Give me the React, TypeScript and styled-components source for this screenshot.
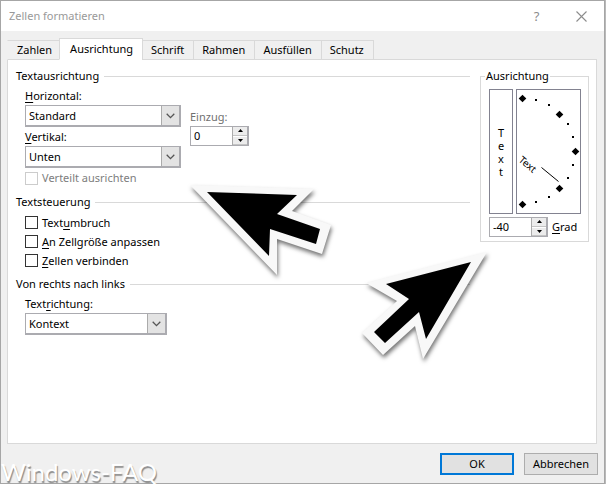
import React, { useId, useState } from "react";
import styled, { createGlobalStyle } from "styled-components";

const GlobalStyle = createGlobalStyle`
  *, *::before, *::after { box-sizing: border-box; }
  body {
    margin: 0;
    background: #b9b9b9;
    color: #000;
    font: 11px/16px "Noto Sans", "Open Sans", sans-serif;
  }
  button, input, select { font: inherit; color: inherit; }
  u { text-underline-offset: 2px; text-decoration-thickness: 1px; }
`;

const Desktop = styled.div`
  position: relative;
  padding-right: 1px;
  overflow: hidden;
`;

const Dialog = styled.main`
  display: flex;
  flex-direction: column;
  min-height: 100vh;
  border: 1px solid #a6a6a6;
  background: #f0f0f0;
`;

const TitleBar = styled.header`
  display: flex;
  align-items: center;
  height: 30px;
  padding-left: 8px;
  background: #fff;
`;

const Title = styled.h1`
  flex: 1;
  margin: 0;
  font-size: 11px;
  font-weight: 400;
  color: #999;
`;

const TitleButton = styled.button`
  display: grid;
  place-items: center;
  width: 45px;
  height: 28px;
  padding: 0;
  border: 0;
  background: transparent;
  color: #8c8c8c;
  font-size: 13px;
`;

const Tabs = styled.div`
  display: flex;
  align-items: flex-end;
  height: 29px;
  margin: 0 7px -1px 6px;
  position: relative;
  z-index: 1;
`;

const Tab = styled.button<{ $active: boolean }>`
  height: ${(p) => (p.$active ? 22 : 20)}px;
  margin-left: -1px;
  padding: ${(p) => (p.$active ? "0 9px 0 10px" : "0 9px 0 8px")};
  border: 1px solid #d9d9d9;
  border-bottom-color: ${(p) => (p.$active ? "#fff" : "#d9d9d9")};
  background: ${(p) => (p.$active ? "#fff" : "#f0f0f0")};
  white-space: nowrap;
  &:first-child { margin-left: 0; padding: 0 7px 0 9px; border-left-color: #f0f0f0; }
`;

const Panel = styled.section`
  display: grid;
  grid-template-columns: minmax(0, 1fr) 109px;
  column-gap: 10px;
  align-items: start;
  flex: 1;
  margin: 0 7px 0 6px;
  padding: 8px 7px 8px 8px;
  border: 1px solid #d9d9d9;
  background: #fff;
`;

const Group = styled.section`
  margin-bottom: 6px;
`;

const GroupTitle = styled.h2`
  display: flex;
  align-items: center;
  gap: 5px;
  margin: 0;
  font-size: 11px;
  font-weight: 400;
  &::after { content: ""; flex: 1; border-top: 1px solid #d9d9d9; }
`;

const GroupBody = styled.div<{ $top: number }>`
  display: flex;
  align-items: flex-start;
  gap: 9px;
  padding: ${(p) => p.$top}px 0 0 9px;
`;

const Stack = styled.div`
  display: flex;
  flex-direction: column;
`;

const Field = styled.div<{ $top?: number; $dim?: boolean }>`
  display: flex;
  flex-direction: column;
  align-items: flex-start;
  gap: 1px;
  margin-top: ${(p) => p.$top ?? 0}px;
  label { color: ${(p) => (p.$dim ? "#707070" : "#000")}; }
`;

const SelectFrame = styled.div<{ $width: number }>`
  display: grid;
  grid-template-columns: 1fr 18px;
  width: ${(p) => p.$width}px;
  height: 22px;
  border: 1px solid #ababb0;
  border-right-width: 2px;
  border-bottom-width: 2px;
  background: #fff;
  select {
    grid-area: 1 / 1 / 2 / 3;
    min-width: 0;
    padding: 0 20px 0 3px;
    border: 0;
    appearance: none;
    background: transparent;
    outline-offset: -2px;
  }
`;

const Arrow = styled.span`
  grid-area: 1 / 2 / 2 / 3;
  display: grid;
  place-items: center;
  border-left: 1px solid #ababab;
  background: #e3e3e3;
  pointer-events: none;
`;

const Check = styled.label<{ $height: number }>`
  display: flex;
  align-items: center;
  gap: 4px;
  height: ${(p) => p.$height}px;
  &:has(:disabled) { color: #7d7d7d; }
`;

const CheckBox = styled.input`
  appearance: none;
  width: 13px;
  height: 13px;
  margin: 0;
  border: 1px solid #333;
  background: #fff;
  &:disabled { border-color: #ccc; }
  &:checked { background: #333; box-shadow: inset 0 0 0 2px #fff; }
`;

const SpinFrame = styled.div`
  display: grid;
  grid-template-columns: 1fr 15px;
  width: 59px;
  height: 20px;
  border: 1px solid #ababb0;
  border-right-width: 2px;
  background: #fff;
  input {
    width: 100%;
    min-width: 0;
    padding: 0 0 0 3px;
    border: 0;
    background: transparent;
  }
`;

const SpinButtons = styled.div`
  display: grid;
  grid-template-rows: 1fr 1fr;
  gap: 1px;
  border-left: 1px solid #ababab;
`;

const SpinButton = styled.button`
  display: grid;
  place-items: center;
  min-height: 0;
  padding: 0;
  border: 0;
  border-bottom: 1px solid #c4c4c4;
  background: #ececec;
`;

const Orientation = styled.fieldset`
  min-width: 0;
  margin: 0;
  padding: 5px 7px 4px 8px;
  border: 1px solid #d9d9d9;
  legend { margin-left: -4px; padding: 0 1px; }
`;

const Previews = styled.div`
  display: grid;
  grid-template-columns: 24px 65px;
  gap: 3px;
  margin-bottom: 3px;
`;

const VerticalText = styled.button`
  height: 125px;
  padding: 0;
  border: 1px solid #828290;
  background: #fff;
  line-height: 13px;
  span { display: block; }
`;

const Dial = styled.svg`
  display: block;
  width: 65px;
  height: 125px;
  border: 1px solid #828290;
  background: #fff;
`;

const DegreeRow = styled.div`
  display: flex;
  align-items: center;
  gap: 4px;
`;

const Footer = styled.footer`
  display: flex;
  justify-content: flex-end;
  gap: 10px;
  padding: 9px 6px 8px;
`;

const Action = styled.button<{ $primary?: boolean }>`
  width: 74px;
  height: 22px;
  padding: 0;
  border: ${(p) => (p.$primary ? "2px solid #0078d7" : "1px solid #adadad")};
  background: #e1e1e1;
`;

const Pointer = styled.svg<{ $left: number; $top: number }>`
  position: absolute;
  left: ${(p) => p.$left}px;
  top: ${(p) => p.$top}px;
  overflow: visible;
  pointer-events: none;
  filter: drop-shadow(1px 3px 2px rgba(0, 0, 0, 0.55));
`;

const Watermark = styled.div`
  position: absolute;
  left: 1px;
  bottom: 0;
  font: 400 24px/24px Lato, sans-serif;
  color: #fff;
  text-shadow: 1px 2px 1px #8c8c8c;
  pointer-events: none;
`;

function Select({ label, value, width, top }: { label: React.ReactNode; value: string; width: number; top?: number }) {
  const id = useId();
  return (
    <Field $top={top}>
      <label htmlFor={id}>{label}</label>
      <SelectFrame $width={width}>
        <select id={id} defaultValue={value}>
          <option>{value}</option>
        </select>
        <Arrow>
          <svg width="9" height="6" viewBox="0 0 9 6" fill="none" stroke="#555" strokeWidth="1.3">
            <path d="M.7.8 4.5 4.6 8.3.8" />
          </svg>
        </Arrow>
      </SelectFrame>
    </Field>
  );
}

function Spinner({ id, start }: { id: string; start: number }) {
  const [value, setValue] = useState(String(start));
  const step = (n: number) => setValue(String((Number(value) || 0) + n));
  return (
    <SpinFrame>
      <input id={id} inputMode="numeric" value={value} onChange={(e) => setValue(e.target.value)} />
      <SpinButtons>
        <SpinButton type="button" aria-label="Erhöhen" onClick={() => step(1)}>
          <svg width="5" height="3" viewBox="0 0 5 3"><path d="M0 3 2.5 0 5 3Z" /></svg>
        </SpinButton>
        <SpinButton type="button" aria-label="Verringern" onClick={() => step(-1)}>
          <svg width="5" height="3" viewBox="0 0 5 3"><path d="M0 0 2.5 3 5 0Z" /></svg>
        </SpinButton>
      </SpinButtons>
    </SpinFrame>
  );
}

const tabs = ["Zahlen", "Ausrichtung", "Schrift", "Rahmen", "Ausfüllen", "Schutz"];
const majorMarks = [[5.5, 8.5], [42.5, 24.5], [58.5, 61.5], [42.5, 98.5], [5.5, 114.5]];
const minorMarks = [[18, 9], [31, 14], [50, 33], [55, 46], [55, 74], [50, 87], [31, 106], [18, 111]];

export default function App() {
  const indentId = useId();
  const degreeId = useId();
  const [active, setActive] = useState("Ausrichtung");
  return (
    <>
      <GlobalStyle />
      <Desktop>
        <Dialog>
          <TitleBar>
            <Title>Zellen formatieren</Title>
            <TitleButton type="button" aria-label="Hilfe">?</TitleButton>
            <TitleButton type="button" aria-label="Schließen">
              <svg width="11" height="11" viewBox="0 0 11 11" stroke="#8c8c8c" strokeWidth="1.1">
                <path d="M.5.5l10 10M10.5.5l-10 10" />
              </svg>
            </TitleButton>
          </TitleBar>
          <Tabs role="tablist">
            {tabs.map((t) => (
              <Tab key={t} type="button" role="tab" aria-selected={t === active} $active={t === active} onClick={() => setActive(t)}>
                {t}
              </Tab>
            ))}
          </Tabs>
          <Panel role="tabpanel" aria-label={active}>
            <div>
              <Group>
                <GroupTitle>Textausrichtung</GroupTitle>
                <GroupBody $top={4}>
                  <Stack>
                    <Select label={<><u>H</u>orizontal:</>} value="Standard" width={156} />
                    <Select label={<><u>V</u>ertikal:</>} value="Unten" width={156} top={2} />
                    <Check $height={20}>
                      <CheckBox type="checkbox" disabled />
                      Verteilt ausrichten
                    </Check>
                  </Stack>
                  <Field $top={21} $dim>
                    <label htmlFor={indentId}>Einzug:</label>
                    <Spinner id={indentId} start={0} />
                  </Field>
                </GroupBody>
              </Group>
              <Group>
                <GroupTitle>Textsteuerung</GroupTitle>
                <GroupBody $top={3}>
                  <Stack>
                    <Check $height={19}><CheckBox type="checkbox" /><span>Text<u>u</u>mbruch</span></Check>
                    <Check $height={19}><CheckBox type="checkbox" /><span><u>A</u>n Zellgröße anpassen</span></Check>
                    <Check $height={19}><CheckBox type="checkbox" /><span><u>Z</u>ellen verbinden</span></Check>
                  </Stack>
                </GroupBody>
              </Group>
              <Group>
                <GroupTitle>Von rechts nach links</GroupTitle>
                <GroupBody $top={4}>
                  <Select label={<>Text<u>r</u>ichtung:</>} value="Kontext" width={142} />
                </GroupBody>
              </Group>
            </div>
            <Orientation>
              <legend>Ausrichtung</legend>
              <Previews>
                <VerticalText type="button" aria-label="Text vertikal">
                  {[..."Text"].map((c, i) => <span key={i}>{c}</span>)}
                </VerticalText>
                <Dial viewBox="0 0 63 123" role="img" aria-label="Textwinkel">
                  {majorMarks.map(([x, y]) => (
                    <path key={y} d={`M${x - 3.8} ${y}l3.8-3.8 3.8 3.8-3.8 3.8z`} />
                  ))}
                  {minorMarks.map(([x, y]) => (
                    <rect key={y} x={x} y={y} width="2" height="2" />
                  ))}
                  <path d="M24.5 77.5l17 14" stroke="#000" />
                  <text transform="translate(1 71) rotate(40)" fontSize="10">Text</text>
                </Dial>
              </Previews>
              <DegreeRow>
                <Spinner id={degreeId} start={-40} />
                <label htmlFor={degreeId}><u>G</u>rad</label>
              </DegreeRow>
            </Orientation>
          </Panel>
          <Footer>
            <Action type="button" $primary>OK</Action>
            <Action type="button">Abbrechen</Action>
          </Footer>
        </Dialog>
        <Pointer $left={190} $top={184} width="142" height="91" viewBox="190 184 142 91" aria-hidden="true">
          <path fill="#f8f8f8" d="M190 185 314 189 292 211 331 225 322 254 277 239V275Z" />
          <path d="M207 192 297 195 277 214 320 229 316 244 270 229 269 256Z" />
        </Pointer>
        <Pointer $left={362} $top={252} width="126" height="107" viewBox="362 252 126 107" aria-hidden="true">
          <path fill="#f8f8f8" d="M487 252 366 283 397 301 362 333 383 355 415 326 423 359Z" />
          <path d="M471 262 386 284 409 299 374 332 385 343 419 312 426 339Z" />
        </Pointer>
        <Watermark>Windows-FAQ</Watermark>
      </Desktop>
    </>
  );
}
